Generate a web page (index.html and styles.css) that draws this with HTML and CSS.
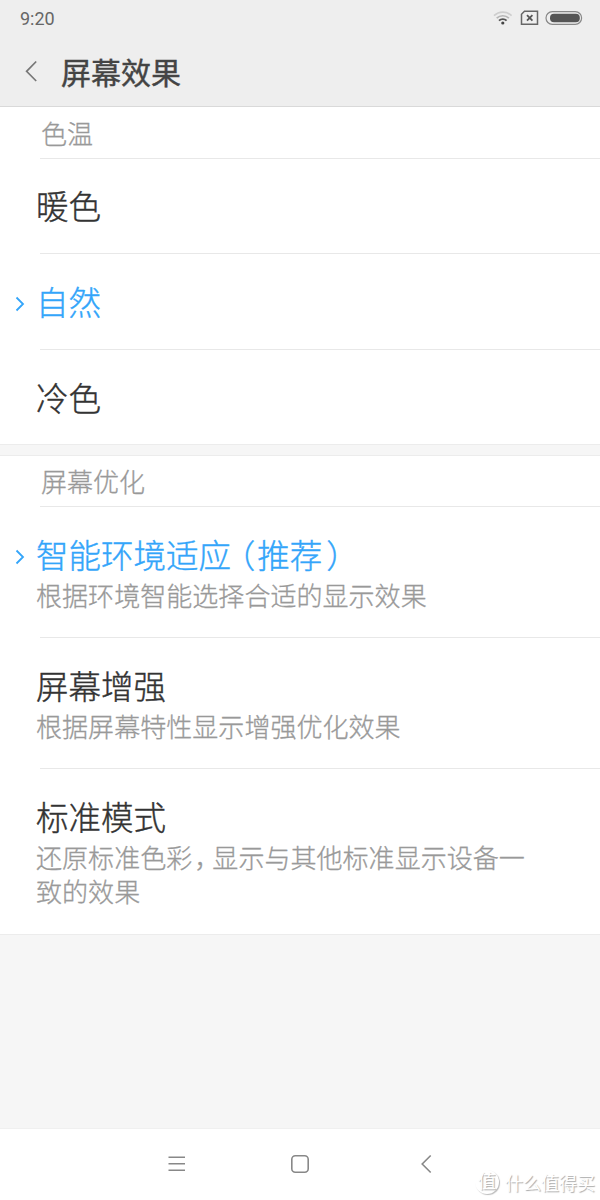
FILE: index.html
```html
<!DOCTYPE html>
<html lang="zh-CN">
<head>
    <meta charset="utf-8">
    <title>屏幕效果</title>
    <link rel="stylesheet" href="styles.css">
</head>
<body>
    <div class="statusbar">
        <span class="time">9:20</span>
        <svg class="status-icons" width="90" height="18" viewBox="0 0 90 18" fill="none">
            <path d="M1 6.7A12.5 12.5 0 0 1 18.6 6.7" stroke="#cecece" stroke-width="1.7"/>
            <path d="M3.7 9.2A8.8 8.8 0 0 1 15.9 9.2" stroke="#b5b5b5" stroke-width="1.7"/>
            <path d="M6 11.7A5.4 5.4 0 0 1 13.6 11.7" stroke="#555" stroke-width="1.9"/>
            <circle cx="9.8" cy="14" r="1.6" fill="#444"/>
            <path d="M31.5 2.2H44.5V15.2H28.5V5.2Z" stroke="#666" stroke-width="1.5"/>
            <path d="M34 6.2L39.4 11.6M39.4 6.2L34 11.6" stroke="#555" stroke-width="1.8"/>
            <rect x="53" y="2.7" width="35.6" height="12.6" rx="6.3" stroke="#888" stroke-width="1.2"/>
            <rect x="57" y="4.7" width="29.8" height="8.6" rx="4" fill="#555"/>
        </svg>
    </div>
    <div class="header">
        <svg class="back" width="14" height="22" viewBox="0 0 14 22"><path d="M12.2 1.5L2.6 11.3L12.2 21" fill="none" stroke="#777" stroke-width="1.7"/></svg>
        <h1>屏幕效果</h1>
    </div>

    <div class="section">
        <div class="caption top">色温</div>
        <div class="item first"><div class="name">暖色</div></div>
        <div class="item selected">
            <svg class="mark" width="10" height="16" viewBox="0 0 10 16"><path d="M1.5 1.5L8 8L1.5 14.5" fill="none" stroke="#33a5fa" stroke-width="1.8"/></svg>
            <div class="name">自然</div>
        </div>
        <div class="item last"><div class="name">冷色</div></div>
    </div>

    <div class="section second">
        <div class="caption">屏幕优化</div>
        <div class="item detail selected">
            <svg class="mark" width="10" height="16" viewBox="0 0 10 16"><path d="M1.5 1.5L8 8L1.5 14.5" fill="none" stroke="#33a5fa" stroke-width="1.8"/></svg>
            <div class="name">智能环境适应<span class="paren-open">（</span>推荐<span class="paren-close">）</span></div>
            <div class="desc">根据环境智能选择合适的显示效果</div>
        </div>
        <div class="item detail">
            <div class="name">屏幕增强</div>
            <div class="desc">根据屏幕特性显示增强优化效果</div>
        </div>
        <div class="item detail tall">
            <div class="name">标准模式</div>
            <div class="desc">还原标准色彩<span class="comma">，</span>显示与其他标准显示设备一<br>致的效果</div>
        </div>
    </div>

    <div class="navbar">
        <svg width="20" height="20" viewBox="0 0 20 20"><path d="M1.5 3.3H18M1.5 9.8H18M1.5 16.3H18" stroke="#888" stroke-width="1.6"/></svg>
        <svg width="20" height="20" viewBox="0 0 20 20"><rect x="1.8" y="1.8" width="16.4" height="16.4" rx="3.5" fill="none" stroke="#888" stroke-width="1.6"/></svg>
        <svg width="20" height="20" viewBox="0 0 20 20"><path d="M17.7 1.5L9.2 10L17.7 18.5" fill="none" stroke="#888" stroke-width="1.6"/></svg>
    </div>
    <div class="watermark"><span class="logo">值</span><span>什么值得买</span></div>
</body>
</html>
```

FILE: styles.css
```css
* {
    box-sizing: border-box;
}

body {
    display: flex;
    flex-direction: column;
    height: 1200px;
    margin: 0;
    background-color: #f6f6f6;
    color: #333;
    font-family: Roboto, "Noto Sans CJK SC", sans-serif;
    overflow: hidden;
}

.statusbar {
    display: flex;
    justify-content: space-between;
    align-items: center;
    height: 36px;
    padding: 0 17px 0 20px;
    background-color: #eee;
}

.time {
    font-size: 18px;
    color: #666;
}

.header {
    display: flex;
    align-items: center;
    height: 71px;
    padding-left: 24px;
    background-color: #eee;
    border-bottom: 1px solid #d9d9d9;
}

h1 {
    margin: 0 0 0 23px;
    padding-top: 6px;
    font-size: 30px;
    font-weight: 400;
    -webkit-text-stroke: 0.4px;
    line-height: 40px;
    color: #444;
}

.section {
    background-color: #fff;
    border-bottom: 1px solid #ececec;
}

.second {
    margin-top: 10px;
    border-top: 1px solid #ececec;
}

.caption {
    height: 50px;
    padding-left: 41px;
    font-size: 26px;
    font-weight: 300;
    -webkit-text-stroke: 0.3px;
    line-height: 54px;
    color: #999;
}

.top {
    height: 51px;
    line-height: 56px;
}

.item {
    position: relative;
    height: 96px;
    padding: 28px 36px 0;
}

.item::before {
    content: "";
    position: absolute;
    top: 0;
    left: 40px;
    right: 0;
    height: 1px;
    background-color: #e8e8e8;
}

.first {
    height: 95px;
    padding-top: 27px;
}

.last {
    height: 95px;
}

.detail {
    height: 131px;
}

.tall {
    height: 166px;
}

.name {
    font-size: 32.5px;
    font-weight: 300;
    -webkit-text-stroke: 0.4px;
    line-height: 46px;
}

.selected .name {
    color: #33a5fa;
}

.paren-open,
.paren-close,
.comma {
    font-feature-settings: "halt";
}

.paren-open {
    margin-left: 8px;
    margin-right: 2px;
}

.paren-close {
    margin-left: 4px;
}

.desc {
    font-size: 26.05px;
    font-weight: 300;
    -webkit-text-stroke: 0.3px;
    line-height: 34px;
    color: #999;
}

.comma {
    margin-left: 2px;
    margin-right: 5px;
}

.mark {
    position: absolute;
    left: 15px;
    top: 43px;
}

.navbar {
    display: flex;
    justify-content: center;
    align-items: center;
    gap: 103px;
    height: 72px;
    padding-bottom: 1px;
    margin-top: auto;
    background-color: #fff;
    border-top: 1px solid #f0f0f0;
}

.watermark {
    position: absolute;
    right: 5px;
    bottom: 5px;
    display: flex;
    align-items: center;
    gap: 6px;
    font-size: 18px;
    color: #fff;
    text-shadow: 1px 1px 1px #aaa;
}

.logo {
    width: 24px;
    height: 24px;
    border-radius: 50%;
    box-shadow: 1px 1px 1px #bbb;
    text-align: center;
    line-height: 24px;
}
```
